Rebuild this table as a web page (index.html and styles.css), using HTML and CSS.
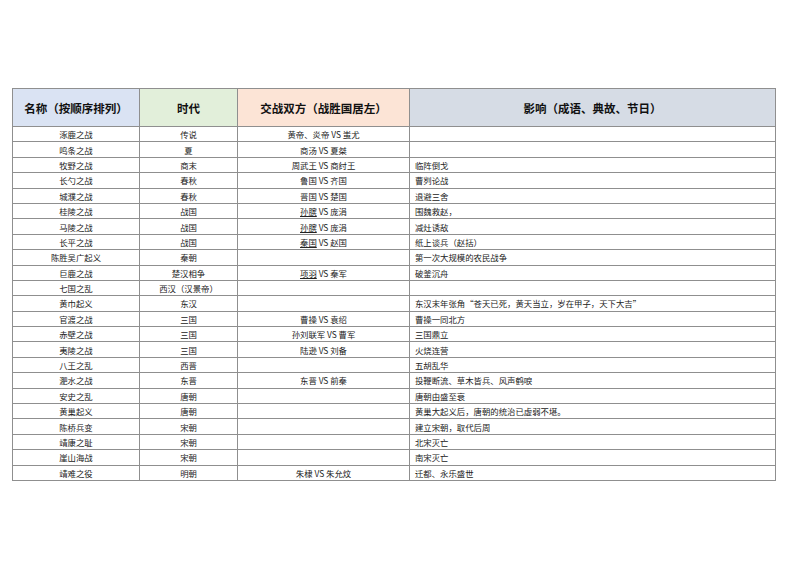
FILE: index.html
```html
<!DOCTYPE html>
<html lang="zh">
<head>
<meta charset="utf-8">
<link rel="stylesheet" href="styles.css">
</head>
<body>
<div class="page">
<table class="sheet">
  <colgroup>
    <col class="c1"><col class="c2"><col class="c3"><col class="c4">
  </colgroup>
  <thead>
    <tr class="head">
      <th class="h-blue">名称（按顺序排列）</th>
      <th class="h-green">时代</th>
      <th class="h-peach">交战双方（战胜国居左）</th>
      <th class="h-gray">影响（成语、典故、节日）</th>
    </tr>
  </thead>
  <tbody>
    <tr><td>涿鹿之战</td><td>传说</td><td>黄帝、炎帝 VS 蚩尤</td><td class="l"></td></tr>
    <tr><td>鸣条之战</td><td>夏</td><td>商汤 VS 夏桀</td><td class="l"></td></tr>
    <tr><td>牧野之战</td><td>商末</td><td>周武王 VS 商纣王</td><td class="l">临阵倒戈</td></tr>
    <tr><td>长勺之战</td><td>春秋</td><td>鲁国 VS 齐国</td><td class="l">曹刿论战</td></tr>
    <tr><td>城濮之战</td><td>春秋</td><td>晋国 VS 楚国</td><td class="l">退避三舍</td></tr>
    <tr><td>桂陵之战</td><td>战国</td><td><span class="u">孙膑</span> VS 庞涓</td><td class="l">围魏救赵，</td></tr>
    <tr><td>马陵之战</td><td>战国</td><td><span class="u">孙膑</span> VS 庞涓</td><td class="l">减灶诱敌</td></tr>
    <tr><td>长平之战</td><td>战国</td><td><span class="u">秦国</span> VS 赵国</td><td class="l">纸上谈兵（赵括）</td></tr>
    <tr><td>陈胜吴广起义</td><td>秦朝</td><td></td><td class="l">第一次大规模的农民战争</td></tr>
    <tr><td>巨鹿之战</td><td>楚汉相争</td><td><span class="u">项羽</span> VS 秦军</td><td class="l">破釜沉舟</td></tr>
    <tr><td>七国之乱</td><td>西汉（汉景帝）</td><td></td><td class="l"></td></tr>
    <tr><td>黄巾起义</td><td>东汉</td><td></td><td class="l">东汉末年张角“苍天已死，黄天当立，岁在甲子，天下大吉”</td></tr>
    <tr><td>官渡之战</td><td>三国</td><td>曹操 VS 袁绍</td><td class="l">曹操一同北方</td></tr>
    <tr><td>赤壁之战</td><td>三国</td><td>孙刘联军 VS 曹军</td><td class="l">三国鼎立</td></tr>
    <tr><td>夷陵之战</td><td>三国</td><td>陆逊 VS 刘备</td><td class="l">火烧连营</td></tr>
    <tr><td>八王之乱</td><td>西晋</td><td></td><td class="l">五胡乱华</td></tr>
    <tr><td>淝水之战</td><td>东晋</td><td>东晋 VS 前秦</td><td class="l">投鞭断流、草木皆兵、风声鹤唳</td></tr>
    <tr><td>安史之乱</td><td>唐朝</td><td></td><td class="l">唐朝由盛至衰</td></tr>
    <tr><td>黄巢起义</td><td>唐朝</td><td></td><td class="l">黄巢大起义后，唐朝的统治已虚弱不堪。</td></tr>
    <tr><td>陈桥兵变</td><td>宋朝</td><td></td><td class="l">建立宋朝，取代后周</td></tr>
    <tr><td>靖康之耻</td><td>宋朝</td><td></td><td class="l">北宋灭亡</td></tr>
    <tr><td>崖山海战</td><td>宋朝</td><td></td><td class="l">南宋灭亡</td></tr>
    <tr><td>靖难之役</td><td>明朝</td><td>朱棣 VS 朱允炆</td><td class="l">迁都、永乐盛世</td></tr>
  </tbody>
</table>
</div>
</body>
</html>
```

FILE: styles.css
```css
html, body {
  margin: 0;
  padding: 0;
  background: #ffffff;
}
.page {
  padding: 88px 0 0 12px;
  font-family: "Noto Sans CJK SC", "Noto Sans", sans-serif;
  color: #222222;
}
.sheet {
  border-collapse: collapse;
  table-layout: fixed;
  width: 763px;
  border: 1.5px solid #8a8a8a;
}
.c1 { width: 127px; }
.c2 { width: 98px; }
.c3 { width: 172px; }
.c4 { width: 366px; }
.sheet th,
.sheet td {
  border: 1px solid #8f8f8f;
  padding: 0;
  text-align: center;
  vertical-align: middle;
  white-space: nowrap;
  overflow: hidden;
}
.head th {
  height: 37px;
  font-size: 11.5px;
  font-weight: 700;
  color: #111111;
}
.h-blue { background: #dae3f3; }
.h-green { background: #e2efda; }
.h-peach { background: #fce4d6; }
.h-gray { background: #d6dce5; }
.sheet td {
  height: 14.4px;
  font-size: 8.4px;
  line-height: 10px;
}
.sheet td.l {
  text-align: left;
  padding-left: 5px;
}
.u {
  text-decoration: underline;
  text-underline-offset: 1px;
}
```
